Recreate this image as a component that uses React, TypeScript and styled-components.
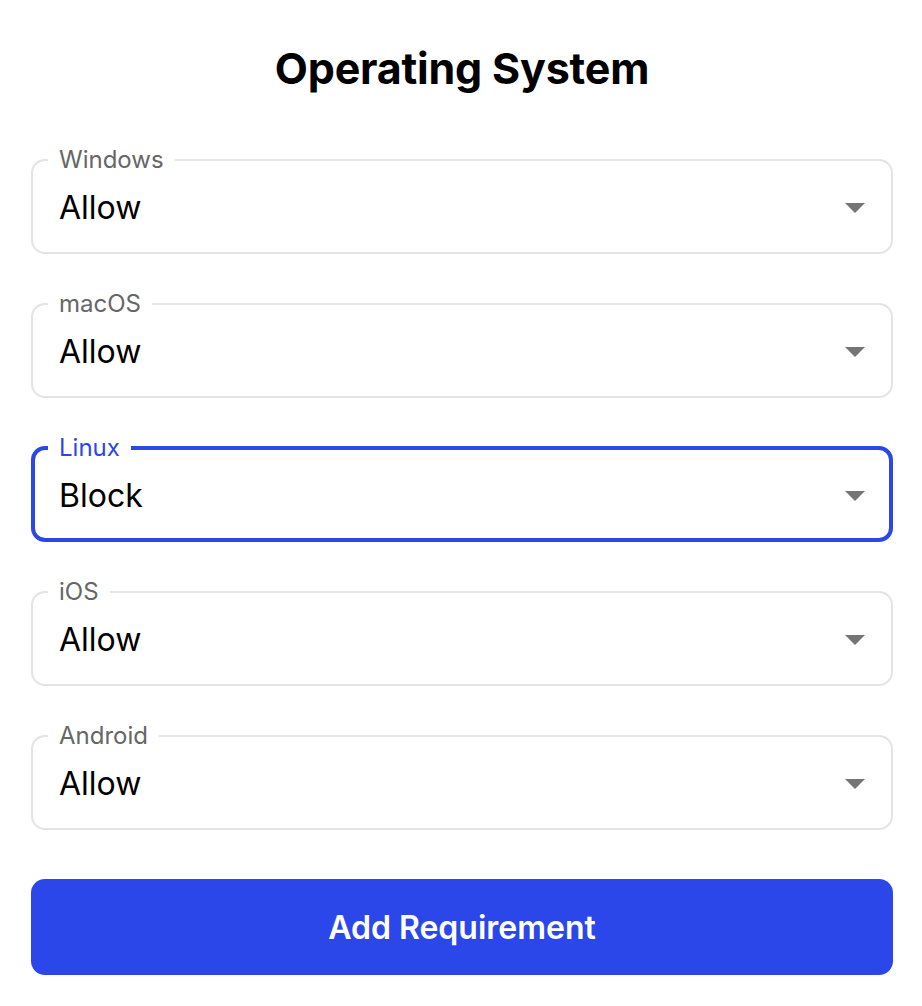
import React from "react";
import styled, { createGlobalStyle } from "styled-components";

const GlobalStyle = createGlobalStyle`
  body {
    margin: 0;
    background: #ffffff;
    font-family: Inter, "Noto Sans", "Liberation Sans", sans-serif;
  }
`;

const Page = styled.div`
  box-sizing: border-box;
  width: 922px;
  min-height: 1006px;
  padding: 42px 29px 0 31px;
  display: flex;
  flex-direction: column;
`;

const Title = styled.h1`
  margin: 0 0 54px;
  font-size: 43px;
  line-height: 52px;
  font-weight: 700;
  color: #000;
  text-align: center;
  letter-spacing: -0.2px;
`;

const Fields = styled.div`
  display: flex;
  flex-direction: column;
  gap: 38px;
`;

// Outlined select: legend notches the top border
const Field = styled.fieldset<{ $focused?: boolean }>`
  margin: 0;
  min-width: 0;
  border: ${(p) => (p.$focused ? "4px solid #2b47ea" : "2px solid #e3e3e8")};
  border-radius: 14px;
  padding: ${(p) => (p.$focused ? "18px 24px 24px 24px" : "18px 26px 26px 26px")};
`;

const Legend = styled.legend<{ $focused?: boolean }>`
  margin-left: -11px;
  padding: 0 11px;
  font-size: 24px;
  line-height: 24px;
  color: ${(p) => (p.$focused ? "#2b47ea" : "#666666")};
`;

const Row = styled.div`
  display: flex;
  align-items: center;
  justify-content: space-between;
`;

const Value = styled.span`
  font-size: 32px;
  line-height: 36px;
  color: #000;
`;

const Arrow = styled.svg`
  width: 20px;
  height: 10px;
  flex: none;
`;

const Button = styled.button`
  margin-top: 49px;
  height: 96px;
  border: none;
  border-radius: 14px;
  background: #2b47ea;
  color: #fff;
  font-family: inherit;
  font-size: 32px;
  font-weight: 600;
  cursor: pointer;
`;

const rows = [
  { label: "Windows", value: "Allow" },
  { label: "macOS", value: "Allow" },
  { label: "Linux", value: "Block", focused: true },
  { label: "iOS", value: "Allow" },
  { label: "Android", value: "Allow" },
];

export default function App() {
  return (
    <Page>
      <GlobalStyle />
      <Title>Operating System</Title>
      <Fields>
        {rows.map((r) => (
          <Field key={r.label} $focused={r.focused}>
            <Legend $focused={r.focused}>{r.label}</Legend>
            <Row>
              <Value>{r.value}</Value>
              <Arrow viewBox="0 0 20 10">
                <path d="M0 0h20L10 10z" fill="#757575" />
              </Arrow>
            </Row>
          </Field>
        ))}
      </Fields>
      <Button>Add Requirement</Button>
    </Page>
  );
}
